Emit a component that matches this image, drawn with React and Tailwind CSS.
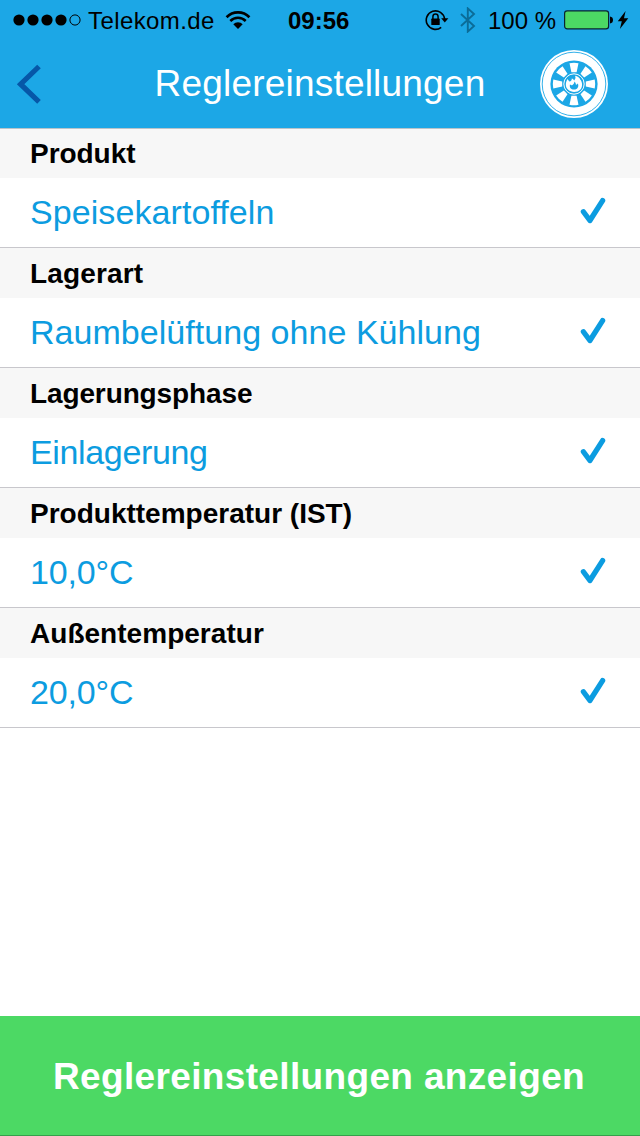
const settings = [
  { label: 'Produkt', value: 'Speisekartoffeln', labelClass: 'tracking-[-0.05px]', valueClass: 'tracking-[0.08px]' },
  { label: 'Lagerart', value: 'Raumbelüftung ohne Kühlung', labelClass: 'tracking-[0.15px]', valueClass: 'tracking-[0.04px]' },
  { label: 'Lagerungsphase', value: 'Einlagerung', labelClass: 'tracking-[-0.12px]', valueClass: 'tracking-[-0.35px]' },
  { label: 'Produkttemperatur (IST)', value: '10,0°C', labelClass: 'tracking-[0px]', valueClass: 'tracking-[-0.15px]' },
  { label: 'Außentemperatur', value: '20,0°C', labelClass: 'tracking-[0.03px]', valueClass: 'tracking-[-0.15px]' },
];

const SignalDots = () => (
  <svg width="68" height="12" viewBox="0 0 68 12" className="shrink-0">
    <circle cx="6" cy="6" r="5.6" />
    <circle cx="20" cy="6" r="5.6" />
    <circle cx="34" cy="6" r="5.6" />
    <circle cx="48" cy="6" r="5.6" />
    <circle cx="62" cy="6" r="5.1" fill="none" stroke="#000" strokeWidth="1" />
  </svg>
);

const WifiIcon = () => (
  <svg width="26" height="18" viewBox="0 0 26 18" className="shrink-0">
    <path d="M1.6 6.2a16 16 0 0 1 22.8 0" fill="none" stroke="#000" strokeWidth="2.7" />
    <path d="M5.3 10a10.8 10.8 0 0 1 15.4 0" fill="none" stroke="#000" strokeWidth="2.5" />
    <path d="M8.3 13.3a6.6 6.6 0 0 1 9.4 0L13 18z" />
  </svg>
);

const RotationLockIcon = () => (
  <svg width="24" height="22" viewBox="0 0 24 22" className="shrink-0">
    <path d="M16.2 18.3A9.2 9.2 0 1 1 19.6 10" fill="none" stroke="#000" strokeWidth="1.6" />
    <path d="M16.2 9.2h7.2l-3.6 4.2z" />
    <rect x="6.3" y="9.6" width="8.4" height="6.4" rx="0.6" />
    <path d="M7.9 10V7.7a2.6 2.6 0 0 1 5.2 0V10" fill="none" stroke="#000" strokeWidth="1.5" />
  </svg>
);

const BluetoothIcon = () => (
  <svg width="16" height="26" viewBox="0 0 16 26" className="shrink-0">
    <path d="M1 7l13 12-6.2 5.6V1.4L14 7 1 19" fill="none" stroke="#0b6c98" strokeWidth="1.9" />
  </svg>
);

const BatteryIcon = () => (
  <svg width="50" height="20" viewBox="0 0 50 20" className="shrink-0">
    <rect x="0.6" y="0.9" width="44" height="18" rx="2.6" fill="#4cd964" stroke="#0a2430" strokeWidth="1.2" />
    <path d="M46 6.5c2 .3 3 1.5 3 3.5s-1 3.2-3 3.5z" />
  </svg>
);

const BoltIcon = () => (
  <svg width="12" height="18" viewBox="0 0 12 18" className="shrink-0">
    <path d="M8.6 0L.8 10.2h4L2.9 18 11.3 7.3H7z" />
  </svg>
);

const FanLogo = () => (
  <svg width="68" height="68" viewBox="-34 -34 68 68" className="shrink-0">
    <circle r="34" fill="#fff" />
    <circle r="31.8" fill="none" stroke="#1ca7e6" strokeWidth="0.9" />
    <circle r="23.6" fill="#1ca7e6" />
    {[0, 45, 90, 135, 180, 225, 270, 315].map((angle) => (
      <path
        key={angle}
        d="M-4.5 -20.7Q0 -21.7 4.5 -20.7L2.6 -11.8H-2.6z"
        fill="#fff"
        transform={`rotate(${angle})`}
      />
    ))}
    <circle r="10.2" fill="#1ca7e6" stroke="#fff" strokeWidth="1" />
    <path
      d="M-6.4 -5C-9 -1 -8.6 3.4 -5.8 5.8C-2.5 8.8 3.5 8.6 6.4 5.4C8.8 2.6 8.6 -1.8 6.2 -4.6C5.8 -6 3.8 -7.6 1 -8.2C2 -6.4 1.4 -5 .2 -3.6C-.4 -4.8 -1.2 -5.4 -2.2 -5.6C-2 -4 -3 -3 -4.6 -2.4C-5.4 -3.2 -6 -4 -6.4 -5z"
      fill="#fff"
    />
    <path d="M-4 .2C-5 3.8 -2.6 5.8 .2 5.6C3.6 5.4 5.2 2.4 3.8 -.8C3.4 .4 2.6 .8 1.8 .6C2 -.8 1.4 -1.8 .4 -2.6C.4 -.8 -.6 .4 -1.8 1.2C-2.8 1.2 -3.6 .8 -4 .2z" fill="#1ca7e6" />
  </svg>
);

const CheckIcon = () => (
  <svg width="26" height="28" viewBox="0 0 26 28" className="shrink-0">
    <path d="M3.4 14.7L9.9 23.5L22.6 3.6" fill="none" stroke="#0c9ce0" strokeWidth="5.3" strokeLinecap="round" strokeLinejoin="round" />
  </svg>
);

const StatusBar = () => (
  <div className="flex h-10 items-center pl-[13px] text-2xl leading-none">
    <SignalDots />
    <span className="ml-[7px] w-[127px] whitespace-nowrap pt-0.5 tracking-[0.4px]">Telekom.de</span>
    <span className="ml-[10px]"><WifiIcon /></span>
    <span className="ml-[37px] w-[62px] whitespace-nowrap pt-0.5 font-bold">09:56</span>
    <span className="ml-[75px]"><RotationLockIcon /></span>
    <span className="ml-[11px]"><BluetoothIcon /></span>
    <span className="ml-[12px] w-[68px] whitespace-nowrap pt-0.5">100 %</span>
    <span className="ml-[8px]"><BatteryIcon /></span>
    <span className="ml-[3px]"><BoltIcon /></span>
  </div>
);

const SettingRow = ({ item }) => (
  <section className="h-[120px] border-b border-[#c8c7cc]">
    <h2 className={`flex h-[50px] items-center bg-[#f7f7f7] px-[30px] pt-0.5 text-[28px] leading-none font-bold text-black ${item.labelClass}`}>
      {item.label}
    </h2>
    <div className="flex h-[69px] items-center justify-between bg-white pr-[34px] pl-[30px]">
      <span className={`whitespace-nowrap pb-0.5 text-[34px] leading-none text-[#0c9ce0] ${item.valueClass}`}>{item.value}</span>
      <span className="mb-1"><CheckIcon /></span>
    </div>
  </section>
);

const App = () => {
  return (
    <div className="flex h-[1136px] w-[640px] flex-col overflow-hidden bg-white font-['Liberation_Sans',Arial,sans-serif] text-black">
      <header className="z-10 h-[129px] shrink-0 border-b border-[#b9c4ca] bg-[#1ca7e6]">
        <StatusBar />
        <div className="flex h-[88px] items-center justify-between pr-8 pl-4">
          <button type="button" aria-label="Zurück">
            <svg width="26" height="40" viewBox="0 0 26 40">
              <path d="M23 2.5L4.6 20.2L23 37.9" fill="none" stroke="#0657a8" strokeWidth="5.2" />
            </svg>
          </button>
          <h1 className="ml-[58px] whitespace-nowrap pb-0.5 text-[37px] leading-none tracking-[0.2px] text-white">Reglereinstellungen</h1>
          <FanLogo />
        </div>
      </header>
      <main className="-mt-px flex-1">
        {settings.map((item) => (
          <SettingRow key={item.label} item={item} />
        ))}
      </main>
      <button
        type="button"
        className="h-[120px] shrink-0 border-b border-[#35a04b] bg-[#4cd964] pt-px pr-0.5 text-[37px] leading-none font-bold tracking-[0.35px] text-white"
      >
        Reglereinstellungen anzeigen
      </button>
    </div>
  );
};

export default App;
